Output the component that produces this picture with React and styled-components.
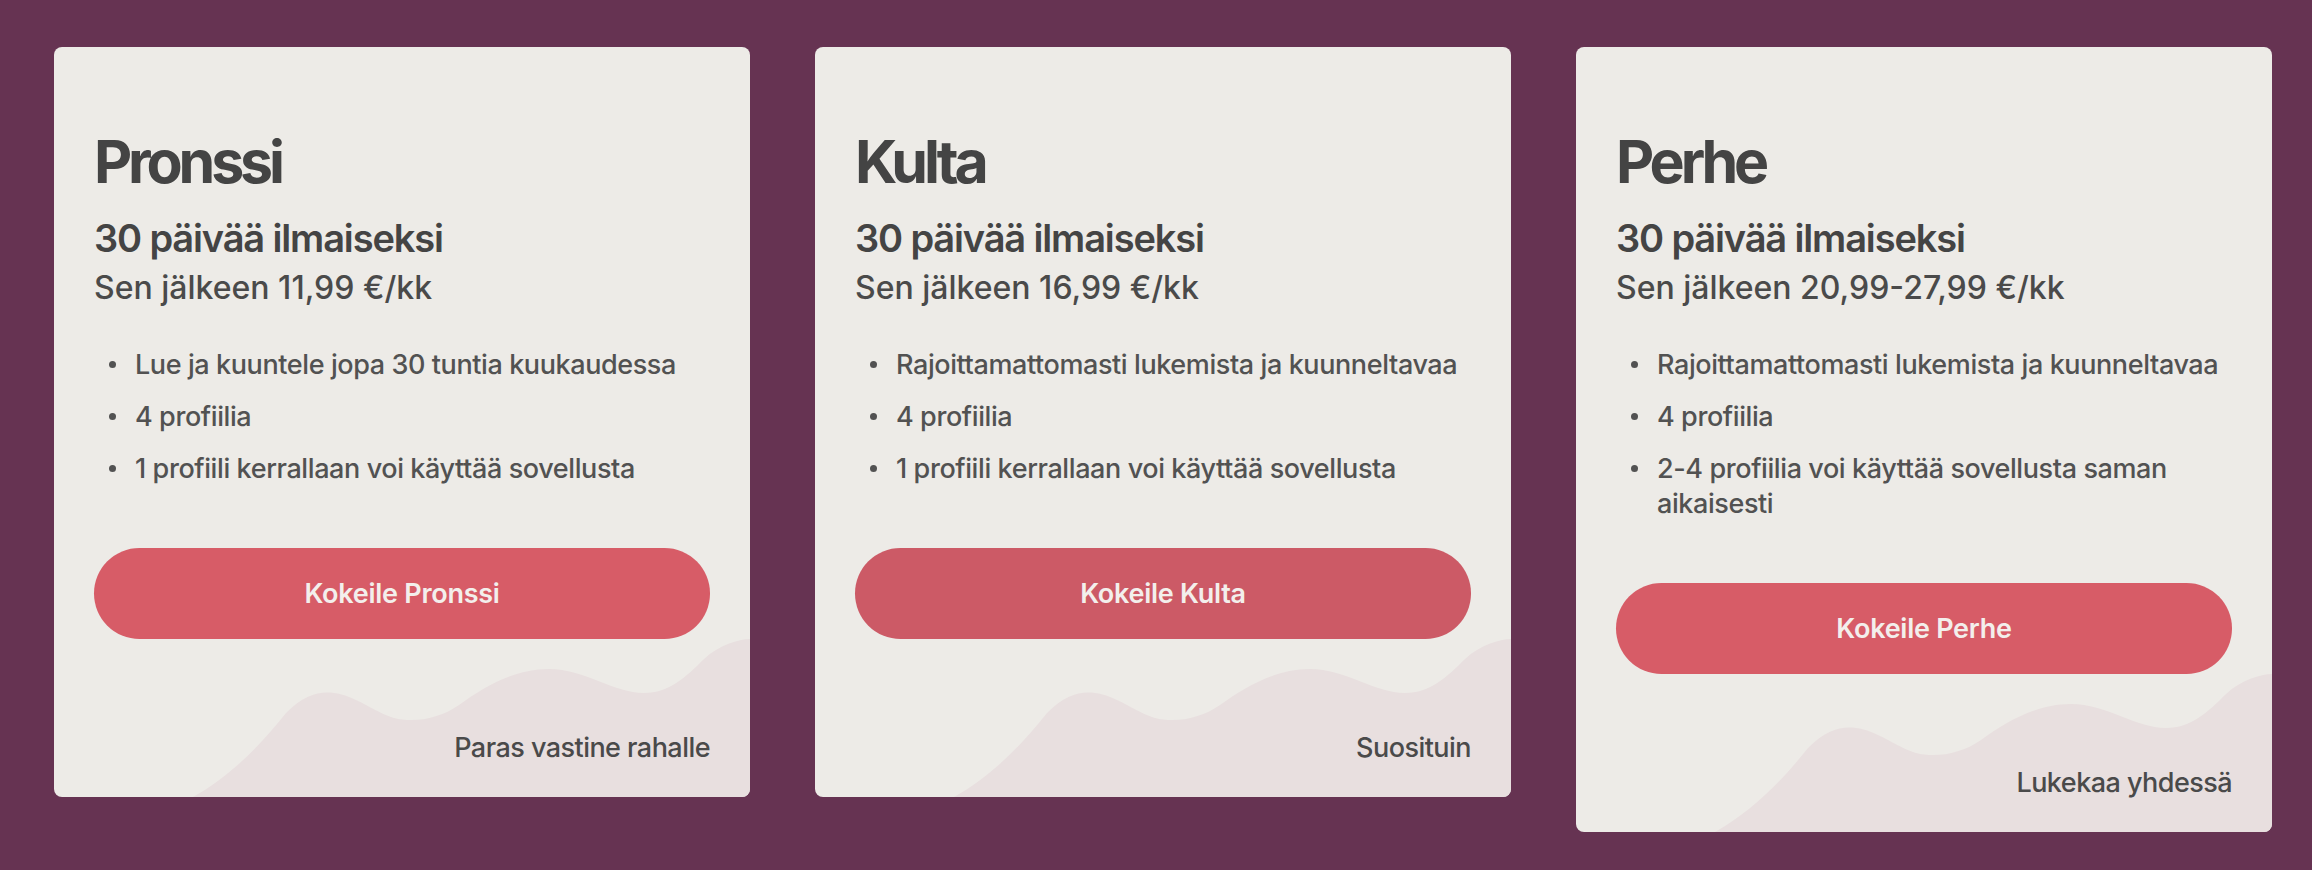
import React from "react";
import styled, { createGlobalStyle } from "styled-components";

const GlobalStyle = createGlobalStyle`
  html, body { margin: 0; padding: 0; }
  body {
    background: #663352;
    font-family: Inter, "Noto Sans", "Liberation Sans", sans-serif;
  }
`;

const Page = styled.main`
  min-height: 870px;
  box-sizing: border-box;
  padding: 47px 0 0 54px;
  display: flex;
  align-items: flex-start;
  gap: 65px;
`;

const Card = styled.section`
  position: relative;
  overflow: hidden;
  width: 696px;
  box-sizing: border-box;
  padding: 79px 40px 32px;
  background: #edebe7;
  border-radius: 8px;
  color: #454545;
  display: flex;
  flex-direction: column;
`;

const Wave = styled.svg`
  position: absolute;
  right: 0;
  bottom: 0;
  width: 696px;
  height: 160px;
  pointer-events: none;
`;

const Content = styled.div`
  position: relative;
  z-index: 1;
  display: flex;
  flex-direction: column;
`;

const Title = styled.h2`
  margin: 0;
  font-size: 59px;
  line-height: 72px;
  font-weight: 700;
  letter-spacing: -0.07em;
  color: #444;
`;

const Trial = styled.p`
  margin: 17px 0 0;
  font-size: 38px;
  line-height: 46px;
  font-weight: 600;
  letter-spacing: -0.03em;
  color: #444;
`;

const Price = styled.p`
  margin: 9px 0 0;
  font-size: 32px;
  line-height: 36px;
  font-weight: 500;
  letter-spacing: 0;
  color: #4a4a4a;
`;

const Features = styled.ul`
  list-style: none;
  margin: 41px -14px 0 0;
  padding: 0;
  display: flex;
  flex-direction: column;
  gap: 17px;
`;

const Feature = styled.li`
  display: flex;
  align-items: flex-start;
  font-size: 27px;
  line-height: 35px;
  font-weight: 500;
  letter-spacing: -0.015em;
  color: #525252;

  &::before {
    content: "";
    flex: none;
    width: 7px;
    height: 7px;
    border-radius: 50%;
    background: #525252;
    margin: 14px 19px 0 15px;
  }
`;

const TryButton = styled.button`
  margin-top: 62px;
  height: 91px;
  width: 100%;
  border: none;
  border-radius: 46px;
  background: ${(p) => (p.$active ? "#cc5a66" : "#d75c67")};
  color: #f3efec;
  font-family: inherit;
  font-size: 27px;
  font-weight: 600;
  letter-spacing: -0.01em;
  cursor: pointer;
`;

const Tagline = styled.p`
  margin: 92px 0 0;
  text-align: right;
  font-size: 27px;
  line-height: 34px;
  font-weight: 500;
  letter-spacing: -0.02em;
  color: #4a4a4a;
`;

const WaveShape = () => (
  <Wave viewBox="0 0 696 160" preserveAspectRatio="none" aria-hidden="true">
    <path
      fill="#e8dfdf"
      d="M139 160 C175 140 205 110 232 76 C250 58 265 54 280 56 C300 58 320 75 340 81 C360 86 385 82 405 68 C430 50 460 32 495 32 C530 32 560 56 590 56 C615 56 632 40 650 22 C665 8 685 2 696 2 L696 160 Z"
    />
  </Wave>
);

const plans = [
  {
    name: "Pronssi",
    price: "Sen jälkeen 11,99 €/kk",
    features: [
      "Lue ja kuuntele jopa 30 tuntia kuukaudessa",
      "4 profiilia",
      "1 profiili kerrallaan voi käyttää sovellusta",
    ],
    tagline: "Paras vastine rahalle",
  },
  {
    name: "Kulta",
    price: "Sen jälkeen 16,99 €/kk",
    features: [
      "Rajoittamattomasti lukemista ja kuunneltavaa",
      "4 profiilia",
      "1 profiili kerrallaan voi käyttää sovellusta",
    ],
    tagline: "Suosituin",
    active: true,
  },
  {
    name: "Perhe",
    price: "Sen jälkeen 20,99-27,99 €/kk",
    features: [
      "Rajoittamattomasti lukemista ja kuunneltavaa",
      "4 profiilia",
      "2-4 profiilia voi käyttää sovellusta saman aikaisesti",
    ],
    tagline: "Lukekaa yhdessä",
  },
];

export default function App() {
  return (
    <>
      <GlobalStyle />
      <Page>
        {plans.map((plan) => (
          <Card key={plan.name}>
            <WaveShape />
            <Content>
              <Title>{plan.name}</Title>
              <Trial>30 päivää ilmaiseksi</Trial>
              <Price>{plan.price}</Price>
              <Features>
                {plan.features.map((f) => (
                  <Feature key={f}>{f}</Feature>
                ))}
              </Features>
              <TryButton $active={plan.active}>Kokeile {plan.name}</TryButton>
              <Tagline>{plan.tagline}</Tagline>
            </Content>
          </Card>
        ))}
      </Page>
    </>
  );
}
